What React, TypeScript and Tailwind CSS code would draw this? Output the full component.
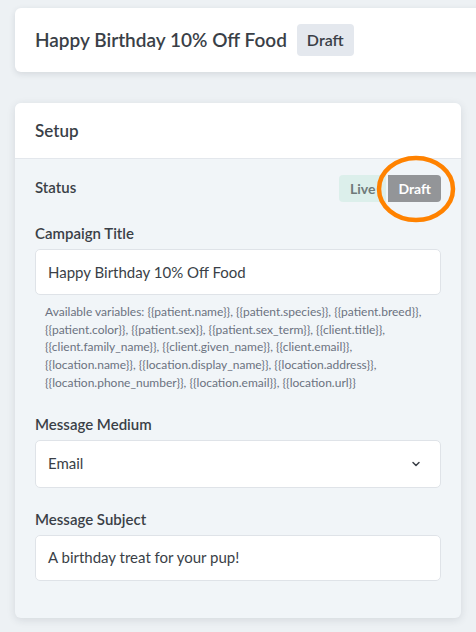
import React from 'react';

const VARIABLES = [
  'patient.name', 'patient.species', 'patient.breed', 'patient.color', 'patient.sex',
  'patient.sex_term', 'client.title', 'client.family_name', 'client.given_name', 'client.email',
  'location.name', 'location.display_name', 'location.address', 'location.phone_number',
  'location.email', 'location.url',
];

const HELP_TEXT = `Available variables: ${VARIABLES.map((v) => `{{${v}}}`).join(', ')}`;

const Label: React.FC<{ children: React.ReactNode }> = ({ children }) => (
  <label className="block text-[15px] font-semibold text-[#3a3f47] leading-5">{children}</label>
);

const TextBox: React.FC<{ value: string }> = ({ value }) => (
  <div className="mt-[6px] h-[46px] flex items-center px-3 bg-white border border-[#dfe3e8] rounded-[5px] text-[15px] text-[#3a3f47]">
    {value}
  </div>
);

const App: React.FC = () => {
  return (
    <div
      className="w-[476px] h-[632px] overflow-hidden bg-[#edf1f4] pt-2"
      style={{ fontFamily: '"Lato", "Noto Sans", sans-serif' }}
    >
      <div className="ml-[15px] mr-[-30px] h-16 bg-white rounded-md shadow-[0_2px_6px_rgba(30,40,60,0.12)] flex items-center pl-5 gap-[10px]">
        <h1 className="text-[19px] font-semibold text-[#3a3f47]">Happy Birthday 10% Off Food</h1>
        <span className="h-8 px-[10px] flex items-center rounded bg-[#e4e8ee] text-[16px] font-semibold text-[#3a3f47]">Draft</span>
      </div>

      <div className="mt-[31px] ml-[15px] w-[446px] bg-[#f1f5f8] rounded-md shadow-[0_2px_8px_rgba(30,40,60,0.12)] overflow-hidden">
        <div className="h-14 bg-white border-b border-[#e3e7ec] flex items-center px-5">
          <h2 className="text-[17px] font-semibold text-[#3a3f47]">Setup</h2>
        </div>

        <div className="px-5 pt-[12px] pb-[37px]">
          <div className="flex items-center justify-between">
            <Label>Status</Label>
            <div className="relative flex items-center gap-[2px] mt-[4px]">
              <button className="h-[27px] px-[11px] rounded-l bg-[#dcefeb] text-[14px] font-bold text-[#6f7a7a]">Live</button>
              <button className="h-[27px] px-[10px] rounded-r bg-[#939598] text-[14px] font-bold text-white">Draft</button>
              <svg className="absolute right-[-17px] top-[-21px] pointer-events-none" width="84" height="70" viewBox="0 0 84 70">
                <ellipse cx="42" cy="35" rx="37" ry="31" fill="none" stroke="#ff8200" strokeWidth="4.5" />
              </svg>
            </div>
          </div>

          <div className="mt-[21px]">
            <Label>Campaign Title</Label>
            <TextBox value="Happy Birthday 10% Off Food" />
            <p className="mt-[8px] px-[10px] text-[12px] leading-[17.7px] text-[#6b7280]">{HELP_TEXT}</p>
          </div>

          <div className="mt-[22px]">
            <Label>Message Medium</Label>
            <div className="mt-[6px] h-[48px] flex items-center justify-between px-3 bg-white border border-[#dfe3e8] rounded-[5px] text-[15px] text-[#3a3f47]">
              <span>Email</span>
              <svg width="12" height="12" viewBox="0 0 12 12" className="mr-[6px]">
                <path d="M3 4.5 L6 7.5 L9 4.5" fill="none" stroke="#3a3f47" strokeWidth="1.5" strokeLinecap="round" strokeLinejoin="round" />
              </svg>
            </div>
          </div>

          <div className="mt-[21px]">
            <Label>Message Subject</Label>
            <TextBox value="A birthday treat for your pup!" />
          </div>
        </div>
      </div>
    </div>
  );
};

export default App;
